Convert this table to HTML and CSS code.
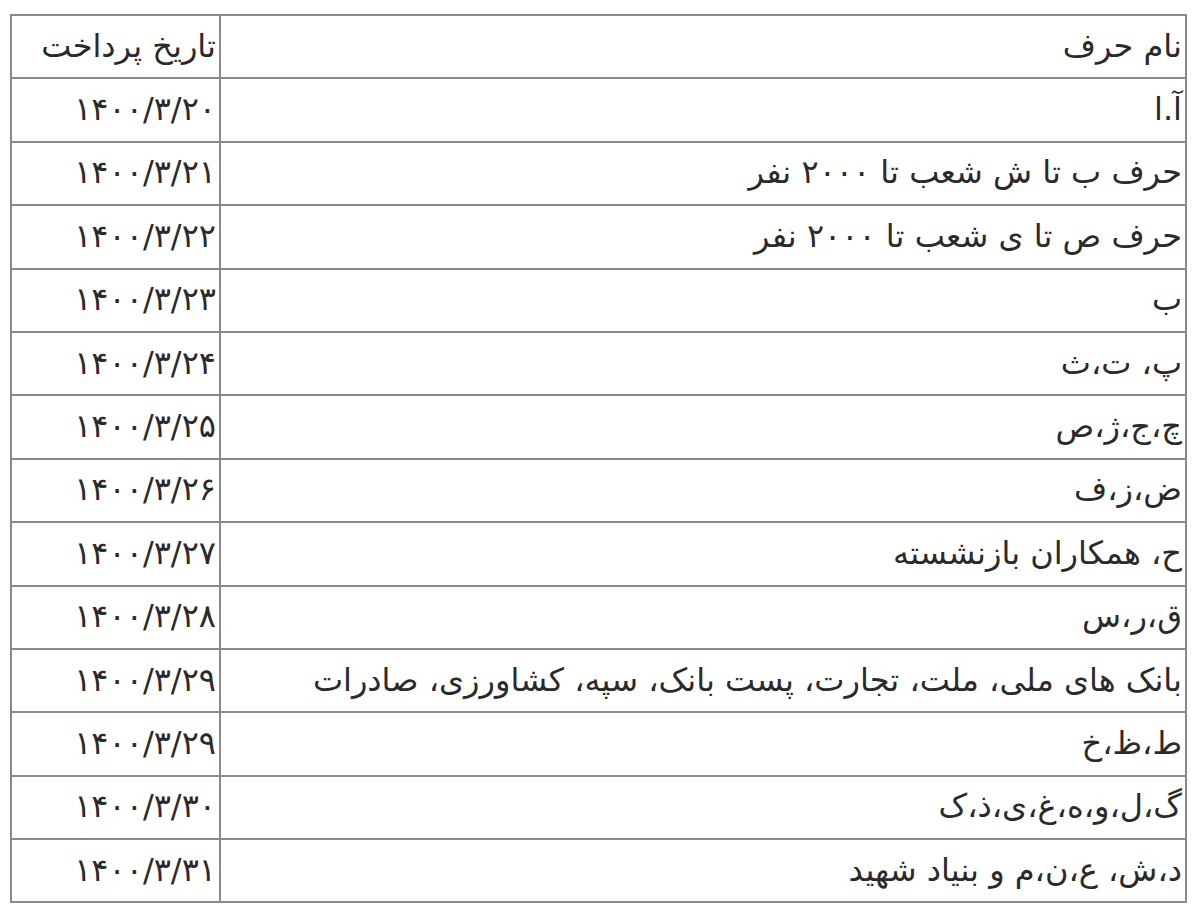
FILE: index.html
```html
<!DOCTYPE html>
<html lang="fa" dir="rtl">
<head>
<meta charset="utf-8">
<link rel="stylesheet" href="styles.css">
</head>
<body>
<div class="wrap">
<table class="sched">
  <tr><td class="name">نام حرف</td><td class="date">تاریخ پرداخت</td></tr>
  <tr><td class="name">آ.ا</td><td class="date">۱۴۰۰/۳/۲۰</td></tr>
  <tr><td class="name">حرف ب تا ش شعب تا ۲۰۰۰ نفر</td><td class="date">۱۴۰۰/۳/۲۱</td></tr>
  <tr><td class="name">حرف ص تا ی شعب تا ۲۰۰۰ نفر</td><td class="date">۱۴۰۰/۳/۲۲</td></tr>
  <tr><td class="name">ب</td><td class="date">۱۴۰۰/۳/۲۳</td></tr>
  <tr><td class="name">پ، ت،ث</td><td class="date">۱۴۰۰/۳/۲۴</td></tr>
  <tr><td class="name">چ،ج،ژ،ص</td><td class="date">۱۴۰۰/۳/۲۵</td></tr>
  <tr><td class="name">ض،ز،ف</td><td class="date">۱۴۰۰/۳/۲۶</td></tr>
  <tr><td class="name">ح، همکاران بازنشسته</td><td class="date">۱۴۰۰/۳/۲۷</td></tr>
  <tr><td class="name">ق،ر،س</td><td class="date">۱۴۰۰/۳/۲۸</td></tr>
  <tr><td class="name">بانک های ملی، ملت، تجارت، پست بانک، سپه، کشاورزی، صادرات</td><td class="date">۱۴۰۰/۳/۲۹</td></tr>
  <tr><td class="name">ط،ظ،خ</td><td class="date">۱۴۰۰/۳/۲۹</td></tr>
  <tr><td class="name">گ،ل،و،ه،غ،ی،ذ،ک</td><td class="date">۱۴۰۰/۳/۳۰</td></tr>
  <tr><td class="name">د،ش، ع،ن،م و بنیاد شهید</td><td class="date">۱۴۰۰/۳/۳۱</td></tr>
</table>
</div>
</body>
</html>
```
FILE: styles.css
```css
html, body {
  margin: 0;
  padding: 0;
  background: #ffffff;
}
.wrap {
  padding: 14px 13px 0 10px;
}
.sched {
  width: 100%;
  border-collapse: collapse;
  font-family: "DejaVu Sans", sans-serif;
  font-size: 32px;
  color: #2a2a2a;
  border: 2px solid #8a8a8a;
}
.sched td {
  border: 2px solid #8a8a8a;
  height: 63.4px;
  padding: 0 3px 2px 3px;
  text-align: right;
  vertical-align: middle;
  box-sizing: border-box;
  white-space: nowrap;
}
.sched td.date {
  width: 209px;
}
```
